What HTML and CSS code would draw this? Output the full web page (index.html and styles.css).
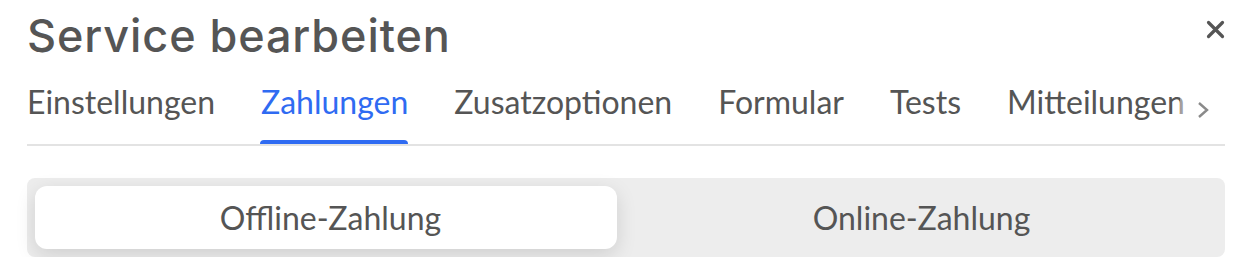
FILE: index.html
```html
<!DOCTYPE html>
<html lang="de">
<head>
<meta charset="UTF-8">
<meta name="viewport" content="width=device-width, initial-scale=1.0">
<title>Service bearbeiten</title>
<link rel="stylesheet" href="styles.css">
</head>
<body>
<div class="panel">
    <header class="panel-head">
        <h1>Service bearbeiten</h1>
        <button class="close" aria-label="Schließen">
            <svg width="19" height="19" viewBox="0 0 19 19"><path d="M2.5 2.5 L16.5 16.5 M16.5 2.5 L2.5 16.5" stroke="#555" stroke-width="3.2" stroke-linecap="round"/></svg>
        </button>
    </header>

    <nav class="tabs">
        <div class="tab-list">
            <a class="tab">Einstellungen</a>
            <a class="tab active">Zahlungen</a>
            <a class="tab">Zusatzoptionen</a>
            <a class="tab">Formular</a>
            <a class="tab">Tests</a>
            <a class="tab">Mitteilungen</a>
        </div>
        <div class="tab-more">
            <svg width="13" height="18" viewBox="0 0 13 18"><path d="M2 2 L10 9 L2 16" fill="none" stroke="#8a8a8a" stroke-width="2.4"/></svg>
        </div>
    </nav>

    <div class="segments">
        <button class="segment selected">Offline-Zahlung</button>
        <button class="segment">Online-Zahlung</button>
    </div>
</div>
</body>
</html>
```

FILE: styles.css
```css
* { margin: 0; padding: 0; box-sizing: border-box; }
body {
    background: #fff;
    font-family: "Lato", sans-serif;
    color: #555;
}
.panel {
    padding: 11px 28px 0 27px;
}
.panel-head {
    display: flex; justify-content: space-between; align-items: flex-start;
}
.panel-head h1 {
    font-family: "Inter", sans-serif;
    font-weight: 500;
    font-size: 45px;
    line-height: 50px;
    letter-spacing: 0.9px;
    color: #555;
}
.close {
    background: none; border: none; cursor: pointer;
    margin-top: 9px; margin-right: 0;
    display: flex;
}
.tabs {
    position: relative;
    margin-top: 21px;
    border-bottom: 2px solid #e3e3e3;
}
.tab-list {
    display: flex; gap: 46px;
    white-space: nowrap;
    overflow: hidden;
}
.tab {
    font-size: 32px;
    line-height: 40px;
    padding-bottom: 22px;
    color: #555;
    position: relative;
    cursor: pointer;
}
.tab.active { color: #2f6bf2; }
.tab.active::after {
    content: "";
    position: absolute; left: -1px; right: 0; bottom: -2px;
    height: 6px;
    background: #2f6bf2;
    border-radius: 4px 4px 0 0;
}
.tab-more {
    position: absolute; top: 0; right: 0; bottom: 0;
    width: 45px;
    padding-top: 19px; padding-left: 17px;
    background: linear-gradient(to right, rgba(255,255,255,0.4), rgba(255,255,255,0.95) 40%, #fff);
}
.segments {
    display: flex;
    margin-top: 32px;
    background: #ededed;
    border-radius: 8px;
    padding: 8px;
}
.segment {
    flex: 1;
    height: 63px;
    border: none;
    background: transparent;
    font-family: "Lato", sans-serif;
    font-size: 32px;
    color: #555;
    position: relative;
    cursor: pointer;
}
.segment.selected::before {
    content: "";
    position: absolute; top: 0; left: 0; right: 9px; bottom: 0;
    background: #fff;
    border-radius: 12px;
    box-shadow: 0 6px 20px rgba(0,0,0,0.13);
    z-index: -1;
}
.segment.selected { z-index: 0; }
```
